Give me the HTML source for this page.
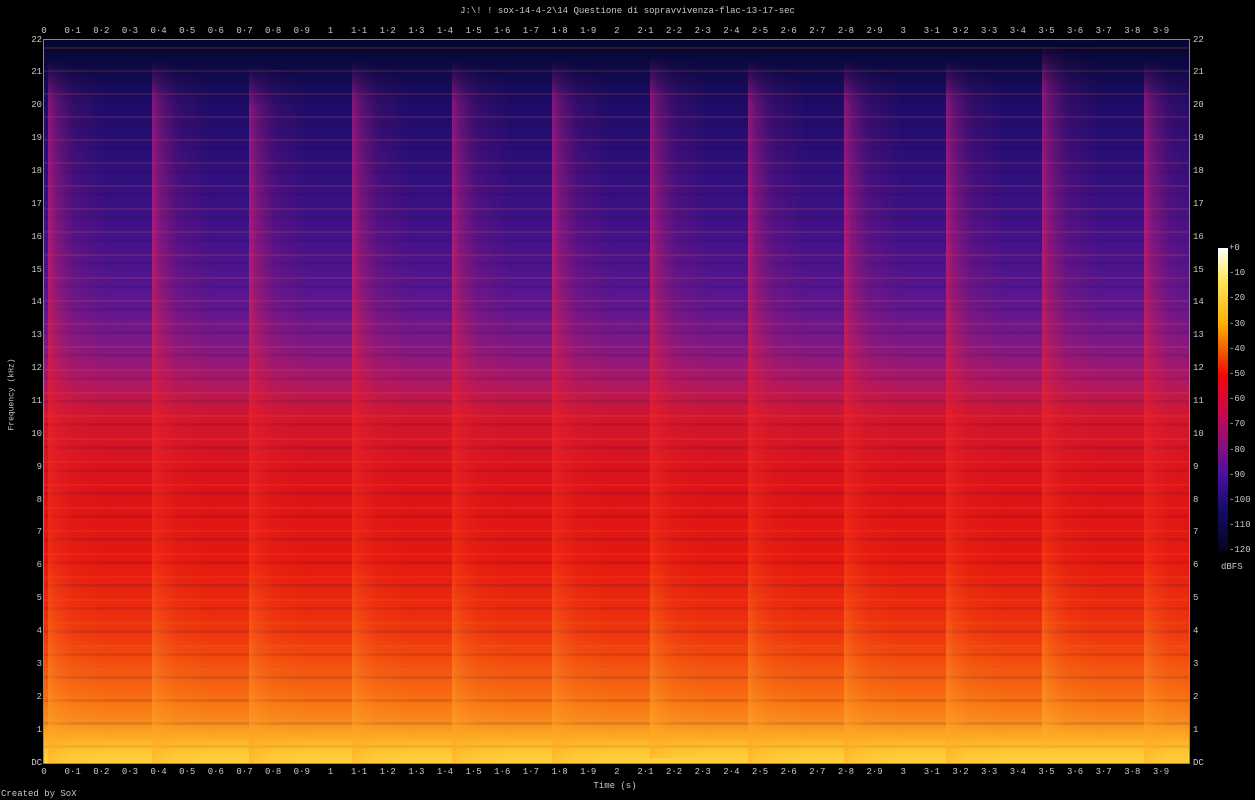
<!DOCTYPE html>
<html><head><meta charset="utf-8">
<style>
html,body{margin:0;padding:0;background:#000;width:1255px;height:800px;overflow:hidden;font-family:"Liberation Mono",monospace;color:#c8c8c8;font-size:9px}
.abs{position:absolute}
#plot{left:44px;top:40px;width:1145px;height:723px;overflow:hidden;
background:linear-gradient(to bottom,#06062e 0%,#0c0a48 4%,#1e0c68 9%,#2e0f7c 18%,#44128a 28%,#5a1690 36%,#7c1888 42%,#a8186a 47%,#d0162e 52%,#dc1218 62%,#e41810 72%,#ee340c 82%,#f66610 90%,#fb9a1e 96%,#ffc838 100%)}
.hl{left:0;width:100%;top:0;height:100%;background:repeating-linear-gradient(to bottom,rgba(0,0,0,0) 0px,rgba(0,0,0,0) 7px,rgba(255,110,60,.14) 7px,rgba(255,110,60,.14) 9px,rgba(0,0,0,0) 9px,rgba(0,0,0,0) 15px,rgba(30,0,50,.12) 15px,rgba(30,0,50,.12) 18px,rgba(0,0,0,0) 18px,rgba(0,0,0,0) 23px)}
.st{top:20px;height:703px;width:60px;
background:linear-gradient(to bottom,rgba(200,30,150,0) 0%,rgba(210,30,140,.6) 6%,rgba(220,30,110,.7) 25%,rgba(235,30,50,.7) 45%,rgba(250,60,20,.6) 70%,rgba(255,180,40,.75) 100%);
-webkit-mask-image:linear-gradient(to right,rgba(0,0,0,1) 0,rgba(0,0,0,.6) 8px,rgba(0,0,0,.2) 25px,rgba(0,0,0,0) 60px);
mask-image:linear-gradient(to right,rgba(0,0,0,1) 0,rgba(0,0,0,.6) 8px,rgba(0,0,0,.2) 25px,rgba(0,0,0,0) 60px)}
.bot{left:0;width:100%;bottom:0;height:40px;background:linear-gradient(to bottom,rgba(255,200,40,0),rgba(255,220,60,.6))}
#frame{left:43px;top:39px;width:1145px;height:723px;border:1px solid #888}
.xr{display:flex;left:29.7px;width:1160px}
.xr span{width:28.65px;text-align:center;flex:none}
.yc{display:flex;flex-direction:column;top:33.6px}
.yc span{height:32.86px;line-height:13px;flex:none}
#cb{left:1218px;top:248px;width:10px;height:303px;background:linear-gradient(to bottom,#fff 0%,#ffe860 10%,#ffb000 25%,#f05000 35%,#f00808 42%,#c80850 55%,#8a107a 65%,#4a10a0 75%,#180c70 85%,#040420 100%)}
.cl{left:1229px;display:flex;flex-direction:column;top:242px}
.cl span{height:25.2px;line-height:12px;flex:none}
</style></head><body>
<div class="abs" id="plot">
<div class="abs hl"></div>
<div class="abs bot"></div>
<div class="abs st" style="left:4px"></div>
<div class="abs st" style="left:108px"></div>
<div class="abs st" style="left:205px;top:25px"></div>
<div class="abs st" style="left:308px"></div>
<div class="abs st" style="left:408px"></div>
<div class="abs st" style="left:508px"></div>
<div class="abs st" style="left:606px;top:15px"></div>
<div class="abs st" style="left:704px"></div>
<div class="abs st" style="left:800px"></div>
<div class="abs st" style="left:902px"></div>
<div class="abs st" style="left:998px;top:5px"></div>
<div class="abs st" style="left:1100px"></div>
</div>
<div class="abs" id="frame"></div>
<div class="abs" style="left:0;width:1255px;top:6px;text-align:center">J:\! ! sox-14-4-2\14 Questione di sopravvivenza-flac-13-17-sec</div>
<div class="abs xr" style="top:26px"><span>0</span><span>0·1</span><span>0·2</span><span>0·3</span><span>0·4</span><span>0·5</span><span>0·6</span><span>0·7</span><span>0·8</span><span>0·9</span><span>1</span><span>1·1</span><span>1·2</span><span>1·3</span><span>1·4</span><span>1·5</span><span>1·6</span><span>1·7</span><span>1·8</span><span>1·9</span><span>2</span><span>2·1</span><span>2·2</span><span>2·3</span><span>2·4</span><span>2·5</span><span>2·6</span><span>2·7</span><span>2·8</span><span>2·9</span><span>3</span><span>3·1</span><span>3·2</span><span>3·3</span><span>3·4</span><span>3·5</span><span>3·6</span><span>3·7</span><span>3·8</span><span>3·9</span></div>
<div class="abs xr" style="top:767px"><span>0</span><span>0·1</span><span>0·2</span><span>0·3</span><span>0·4</span><span>0·5</span><span>0·6</span><span>0·7</span><span>0·8</span><span>0·9</span><span>1</span><span>1·1</span><span>1·2</span><span>1·3</span><span>1·4</span><span>1·5</span><span>1·6</span><span>1·7</span><span>1·8</span><span>1·9</span><span>2</span><span>2·1</span><span>2·2</span><span>2·3</span><span>2·4</span><span>2·5</span><span>2·6</span><span>2·7</span><span>2·8</span><span>2·9</span><span>3</span><span>3·1</span><span>3·2</span><span>3·3</span><span>3·4</span><span>3·5</span><span>3·6</span><span>3·7</span><span>3·8</span><span>3·9</span></div>
<div class="abs yc" style="left:28px;width:14px;text-align:right"><span>22</span><span>21</span><span>20</span><span>19</span><span>18</span><span>17</span><span>16</span><span>15</span><span>14</span><span>13</span><span>12</span><span>11</span><span>10</span><span>9</span><span>8</span><span>7</span><span>6</span><span>5</span><span>4</span><span>3</span><span>2</span><span>1</span><span>DC</span></div>
<div class="abs yc" style="left:1193px"><span>22</span><span>21</span><span>20</span><span>19</span><span>18</span><span>17</span><span>16</span><span>15</span><span>14</span><span>13</span><span>12</span><span>11</span><span>10</span><span>9</span><span>8</span><span>7</span><span>6</span><span>5</span><span>4</span><span>3</span><span>2</span><span>1</span><span>DC</span></div>
<div class="abs" style="left:-33px;top:390px;width:90px;text-align:center;white-space:nowrap;transform:rotate(-90deg);font-size:8px">Frequency (kHz)</div>
<div class="abs" style="left:0;width:1230px;top:781px;text-align:center">Time (s)</div>
<div class="abs" style="left:1px;top:789px">Created by SoX</div>
<div class="abs" id="cb"></div>
<div class="abs cl"><span>+0</span><span>-10</span><span>-20</span><span>-30</span><span>-40</span><span>-50</span><span>-60</span><span>-70</span><span>-80</span><span>-90</span><span>-100</span><span>-110</span><span>-120</span></div>
<div class="abs" style="left:1221px;top:562px">dBFS</div>
</body></html>
